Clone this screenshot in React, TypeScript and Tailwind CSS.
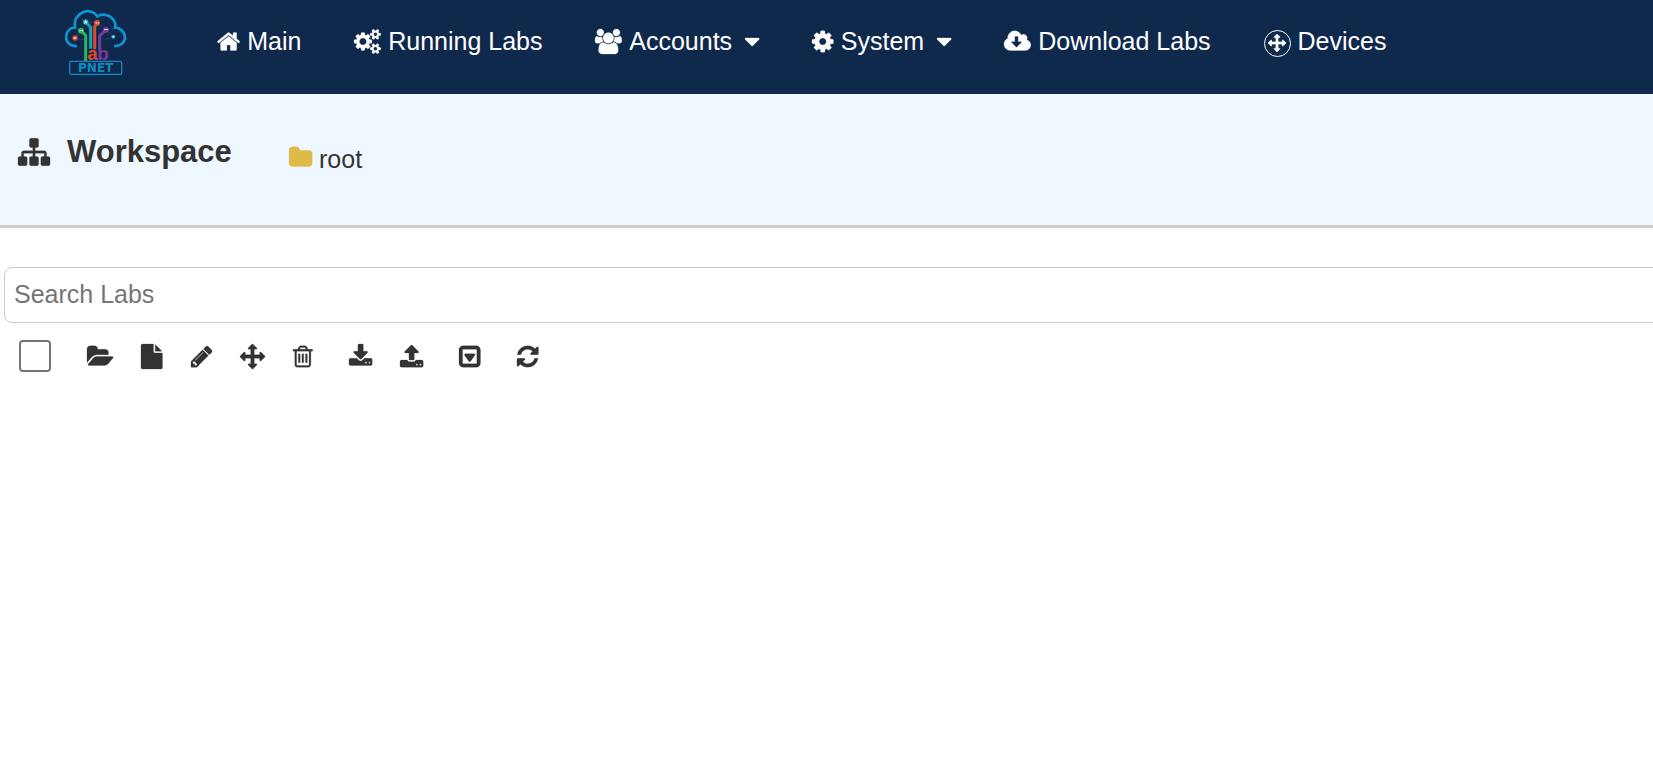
import React from 'react';

// Glyph outlines sit on a 1792 unit em square, only the width differs
const ICONS = {
  home: {
    width: 1664,
    path: 'M1408 992v480q0 26-19 45t-45 19h-384v-384h-256v384h-384q-26 0-45-19t-19-45v-480q0-1 .5-3t.5-3l575-474 575 474q1 2 1 6zm223-69l-62 74q-8 9-21 11h-3q-13 0-21-7l-692-577-692 577q-12 8-24 7-13-2-21-11l-62-74q-8-10-7-23.5t11-21.5l719-599q32-26 76-26t76 26l244 204v-195q0-14 9-23t23-9h192q14 0 23 9t9 23v408l219 182q10 8 11 21.5t-7 23.5z',
  },
  cogs: {
    width: 1920,
    path: 'M896 896q0-106-75-181t-181-75-181 75-75 181 75 181 181 75 181-75 75-181zm768 512q0-52-38-90t-90-38-90 38-38 90q0 53 37.5 90.5t90.5 37.5 90.5-37.5 37.5-90.5zm0-1024q0-52-38-90t-90-38-90 38-38 90q0 53 37.5 90.5t90.5 37.5 90.5-37.5 37.5-90.5zm-384 421v185q0 10-7 19.5t-16 10.5l-155 24q-11 35-32 76 34 48 90 115 7 11 7 20 0 12-7 19-23 30-82.5 89.5t-78.5 59.5q-11 0-21-7l-115-90q-37 19-77 31-11 108-23 155-7 24-30 24h-186q-11 0-20-7.5t-10-17.5l-23-153q-34-10-75-31l-118 89q-7 7-20 7-11 0-21-8-144-133-144-160 0-9 7-19 10-14 41-53t47-61q-23-44-35-82l-152-24q-10-1-17-9.5t-7-19.5v-185q0-10 7-19.5t16-10.5l155-24q11-35 32-76-34-48-90-115-7-11-7-20 0-12 7-20 22-30 82-89t79-59q11 0 21 7l115 90q34-18 77-32 11-108 23-154 7-24 30-24h186q11 0 20 7.5t10 17.5l23 153q34 10 75 31l118-89q8-7 20-7 11 0 21 8 144 133 144 160 0 8-7 19-12 16-42 54t-45 60q23 48 34 82l152 23q10 2 17 10.5t7 19.5zm640 533v140q0 16-149 31-12 27-30 52 51 113 51 138 0 4-4 7-122 71-124 71-8 0-46-47t-52-68q-20 2-30 2t-30-2q-14 21-52 68t-46 47q-2 0-124-71-4-3-4-7 0-25 51-138-18-25-30-52-149-15-149-31v-140q0-16 149-31 13-29 30-52-51-113-51-138 0-4 4-7 4-2 35-20t59-34 30-16q8 0 46 46.5t52 67.5q20-2 30-2t30 2q51-71 92-112l6-2q4 0 124 70 4 3 4 7 0 25-51 138 17 23 30 52 149 15 149 31zm0-1024v140q0 16-149 31-12 27-30 52 51 113 51 138 0 4-4 7-122 71-124 71-8 0-46-47t-52-68q-20 2-30 2t-30-2q-14 21-52 68t-46 47q-2 0-124-71-4-3-4-7 0-25 51-138-18-25-30-52-149-15-149-31v-140q0-16 149-31 13-29 30-52-51-113-51-138 0-4 4-7 4-2 35-20t59-34 30-16q8 0 46 46.5t52 67.5q20-2 30-2t30 2q51-71 92-112l6-2q4 0 124 70 4 3 4 7 0 25-51 138 17 23 30 52 149 15 149 31z',
  },
  users: {
    width: 1920,
    path: 'M593 896q-162 5-265 128h-134q-82 0-138-40.5t-56-118.5q0-353 124-353 6 0 43.5 21t97.5 42.5 119 21.5q67 0 133-23-5 37-5 66 0 139 81 256zm1071 637q0 120-73 189.5t-194 69.5h-874q-121 0-194-69.5t-73-189.5q0-53 3.5-103.5t14-109 26.5-108.5 43-97.5 62-81 85.5-53.5 111.5-20q10 0 43 21.5t73 48 107 48 135 21.5 135-21.5 107-48 73-48 43-21.5q61 0 111.5 20t85.5 53.5 62 81 43 97.5 26.5 108.5 14 109 3.5 103.5zm-1024-1277q0 106-75 181t-181 75-181-75-75-181 75-181 181-75 181 75 75 181zm704 384q0 159-112.5 271.5t-271.5 112.5-271.5-112.5-112.5-271.5 112.5-271.5 271.5-112.5 271.5 112.5 112.5 271.5zm576 225q0 78-56 118.5t-138 40.5h-134q-103-123-265-128 81-117 81-256 0-29-5-66 66 23 133 23 59 0 119-21.5t97.5-42.5 43.5-21q124 0 124 353zm-128-609q0 106-75 181t-181 75-181-75-75-181 75-181 181-75 181 75 75 181z',
  },
  cog: {
    width: 1536,
    path: 'M1024 896q0-106-75-181t-181-75-181 75-75 181 75 181 181 75 181-75 75-181zm512-109v222q0 12-8 23t-20 13l-185 28q-19 54-39 91 35 50 107 138 10 12 10 25t-9 23q-27 37-99 108t-94 71q-12 0-26-9l-138-108q-44 23-91 38-16 136-29 186-7 28-36 28h-222q-14 0-24.5-8.5t-11.5-21.5l-28-184q-49-16-90-37l-141 107q-10 9-25 9-14 0-25-11-126-114-165-168-7-10-7-23 0-12 8-23 15-21 51-66.5t54-70.5q-27-50-41-99l-183-27q-13-2-21-12.5t-8-23.5v-222q0-12 8-23t19-13l186-28q14-46 39-92-40-57-107-138-10-12-10-24 0-10 9-23 26-36 98.5-107.5t94.5-71.5q13 0 26 10l138 107q44-23 91-38 16-136 29-186 7-28 36-28h222q14 0 24.5 8.5t11.5 21.5l28 184q49 16 90 37l142-107q9-9 24-9 13 0 25 10 129 119 165 170 7 8 7 22 0 12-8 23-15 21-51 66.5t-54 70.5q26 50 41 98l183 28q13 2 21 12.5t8 23.5z',
  },
  cloudDownload: {
    width: 1920,
    path: 'M1280 928q0-14-9-23t-23-9h-224v-352q0-13-9.5-22.5t-22.5-9.5h-192q-13 0-22.5 9.5t-9.5 22.5v352h-224q-13 0-22.5 9.5t-9.5 22.5q0 14 9 23l352 352q9 9 23 9t23-9l351-351q10-12 10-24zm640 224q0 159-112.5 271.5t-271.5 112.5h-1088q-185 0-316.5-131.5t-131.5-316.5q0-130 70-240t188-165q-2-30-2-43 0-212 150-362t362-150q156 0 285.5 87t188.5 231q71-62 166-62 106 0 181 75t75 181q0 76-41 138 130 31 213.5 135.5t83.5 238.5z',
  },
  arrows: {
    width: 1792,
    path: 'M1792 896q0 26-19 45l-256 256q-19 19-45 19t-45-19-19-45v-128h-384v384h128q26 0 45 19t19 45-19 45l-256 256q-19 19-45 19t-45-19l-256-256q-19-19-19-45t19-45 45-19h128v-384h-384v128q0 26-19 45t-45 19-45-19l-256-256q-19-19-19-45t19-45l256-256q19-19 45-19t45 19 19 45v128h384v-384h-128q-26 0-45-19t-19-45 19-45l256-256q19-19 45-19t45 19l256 256q19 19 19 45t-19 45-45 19h-128v384h384v-128q0-26 19-45t45-19 45 19l256 256q19 19 19 45z',
  },
  caretDown: {
    width: 1024,
    path: 'M1024 704q0 26-19 45l-448 448q-19 19-45 19t-45-19l-448-448q-19-19-19-45t19-45 45-19h896q26 0 45 19t19 45z',
  },
  sitemap: {
    width: 1792,
    path: 'M1792 1248v320q0 40-28 68t-68 28h-320q-40 0-68-28t-28-68v-320q0-40 28-68t68-28h96v-192h-512v192h96q40 0 68 28t28 68v320q0 40-28 68t-68 28h-320q-40 0-68-28t-28-68v-320q0-40 28-68t68-28h96v-192h-512v192h96q40 0 68 28t28 68v320q0 40-28 68t-68 28h-320q-40 0-68-28t-28-68v-320q0-40 28-68t68-28h96v-192q0-52 38-90t90-38h512v-192h-96q-40 0-68-28t-28-68v-320q0-40 28-68t68-28h320q40 0 68 28t28 68v320q0 40-28 68t-68 28h-96v192h512q52 0 90 38t38 90v192h96q40 0 68 28t28 68z',
  },
  folder: {
    width: 1664,
    path: 'M1664 608v704q0 92-66 158t-158 66h-1216q-92 0-158-66t-66-158v-960q0-92 66-158t158-66h320q92 0 158 66t66 158v32h672q92 0 158 66t66 158z',
  },
  folderOpen: {
    width: 1879,
    path: 'M1879 952q0 31-31 66l-336 396q-43 51-120.5 86.5t-143.5 35.5h-1088q-34 0-60.5-13t-26.5-43q0-31 31-66l336-396q43-51 120.5-86.5t143.5-35.5h1088q34 0 60.5 13t26.5 43zm-343-344v160h-832q-94 0-197 47.5t-164 119.5l-337 396-5 6q0-4-.5-12.5t-.5-12.5v-960q0-92 66-158t158-66h320q92 0 158 66t66 158v32h544q92 0 158 66t66 158z',
  },
  file: {
    width: 1536,
    path: 'M1024 512v-472q22 14 36 28l408 408q14 14 28 36h-472zm-128 32q0 40 28 68t68 28h544v1056q0 40-28 68t-68 28h-1344q-40 0-68-28t-28-68v-1600q0-40 28-68t68-28h800v544z',
  },
  pencil: {
    width: 1536,
    path: 'M363 1536l91-91-235-235-91 91v107h128v128h107zm523-928q0-22-22-22-10 0-17 7l-542 542q-7 7-7 17 0 22 22 22 10 0 17-7l542-542q7-7 7-17zm-54-192l416 416-832 832h-416v-416zm683 96q0 53-37 90l-166 166-416-416 166-165q36-38 90-38 53 0 91 38l235 234q37 39 37 91z',
  },
  trash: {
    width: 1408,
    path: 'M512 736v576q0 14-9 23t-23 9h-64q-14 0-23-9t-9-23v-576q0-14 9-23t23-9h64q14 0 23 9t9 23zm256 0v576q0 14-9 23t-23 9h-64q-14 0-23-9t-9-23v-576q0-14 9-23t23-9h64q14 0 23 9t9 23zm256 0v576q0 14-9 23t-23 9h-64q-14 0-23-9t-9-23v-576q0-14 9-23t23-9h64q14 0 23 9t9 23zm128 724v-948h-896v948q0 22 7 40.5t14.5 27 10.5 8.5h832q3 0 10.5-8.5t14.5-27 7-40.5zm-672-1076h448l-48-117q-7-9-17-11h-317q-10 2-17 11zm928 32v64q0 14-9 23t-23 9h-96v948q0 83-47 143.5t-113 60.5h-832q-66 0-113-58.5t-47-141.5v-952h-96q-14 0-23-9t-9-23v-64q0-14 9-23t23-9h309l70-167q15-37 54-63t79-26h320q40 0 79 26t54 63l70 167h309q14 0 23 9t9 23z',
  },
  download: {
    width: 1664,
    path: 'M1280 1344q0-26-19-45t-45-19-45 19-19 45 19 45 45 19 45-19 19-45zm256 0q0-26-19-45t-45-19-45 19-19 45 19 45 45 19 45-19 19-45zm128-224v320q0 40-28 68t-68 28h-1472q-40 0-68-28t-28-68v-320q0-40 28-68t68-28h465l135 136q58 56 136 56t136-56l136-136h464q40 0 68 28t28 68zm-325-569q17 41-14 70l-448 448q-18 19-45 19t-45-19l-448-448q-31-29-14-70 17-39 59-39h256v-448q0-26 19-45t45-19h256q26 0 45 19t19 45v448h256q42 0 59 39z',
  },
  upload: {
    width: 1664,
    path: 'M1280 1472q0-26-19-45t-45-19-45 19-19 45 19 45 45 19 45-19 19-45zm256 0q0-26-19-45t-45-19-45 19-19 45 19 45 45 19 45-19 19-45zm128-224v320q0 40-28 68t-68 28h-1472q-40 0-68-28t-28-68v-320q0-40 28-68t68-28h427q21 56 70.5 92t110.5 36h256q61 0 110.5-36t70.5-92h427q40 0 68 28t28 68zm-325-648q-17 40-59 40h-256v448q0 26-19 45t-45 19h-256q-26 0-45-19t-19-45v-448h-256q-42 0-59-40-17-39 14-69l448-448q18-19 45-19t45 19l448 448q31 30 14 69z',
  },
  caretSquare: {
    width: 1536,
    path: 'M1145 733q18 35-5 66l-320 448q-19 25-52 25t-52-25l-320-448q-23-31-5-66 17-35 57-35h640q40 0 57 35zm135 643v-960q0-14-9.5-23t-22.5-9h-960q-13 0-22.5 9.5t-9.5 22.5v960q0 13 9.5 22.5t22.5 9.5h960q13 0 22.5-9.5t9.5-22.5zm256-960v960q0 119-84.5 203.5t-203.5 84.5h-960q-119 0-203.5-84.5t-84.5-203.5v-960q0-119 84.5-203.5t203.5-84.5h960q119 0 203.5 84.5t84.5 203.5z',
  },
  refresh: {
    width: 1536,
    path: 'M1511 1056q0 5-1 7-64 268-268 434.5t-478 166.5q-146 0-282.5-55t-243.5-157l-129 129q-19 19-45 19t-45-19-19-45v-448q0-26 19-45t45-19h448q26 0 45 19t19 45-19 45l-137 137q71 66 161 102t187 36q134 0 250-65t186-179q11-17 53-117 8-23 30-23h192q13 0 22.5 9.5t9.5 22.5zm25-800v448q0 26-19 45t-45 19h-448q-26 0-45-19t-19-45 19-45l138-138q-148-137-349-137-134 0-250 65t-186 179q-11 17-53 117-8 23-30 23h-199q-13 0-22.5-9.5t-9.5-22.5v-7q65-268 270-434.5t480-166.5q146 0 284 55.5t245 156.5l130-129q19-19 45-19t45 19 19 45z',
  },
};

type IconName = keyof typeof ICONS;

const Icon: React.FC<{ name: IconName; className?: string }> = ({ name, className = 'h-[25px]' }) => (
  <svg
    viewBox={`0 0 ${ICONS[name].width} 1792`}
    className={`${className} w-auto shrink-0 overflow-visible`}
    fill="currentColor"
    stroke="currentColor"
    strokeWidth="18"
    aria-hidden="true"
  >
    <path d={ICONS[name].path} />
  </svg>
);

const Logo = () => (
  <svg viewBox="45 27 186 201" className="h-[67px] w-[62px]" role="img" aria-label="PNETLab">
    <g fill="none" stroke="#1a5a80" strokeWidth="1.5">
      <path d="M75 114L93 92L107 66L141 69L168 89L190 110M107 66L85 50M141 69L166 50M168 89L205 84M93 92L66 84M75 114L105 120M190 110L160 120" />
    </g>
    <path
      d="M81 138C58 140 46 124 49 106C51 92 62 83 75 82C71 61 82 43 101 36C117 30 134 36 142 49C158 39 181 45 190 59C196 67 197 76 195 82C213 84 225 97 225 112C225 128 212 139 192 138"
      fill="none"
      stroke="#0d96cf"
      strokeWidth="8"
    />
    <g fill="none" strokeWidth="9">
      <path d="M93 92L107 106V183" stroke="#2eb457" />
      <path d="M107 66L122 82V146" stroke="#12a5b5" />
      <path d="M141 69L134 80V148" stroke="#dd4a2c" />
      <path d="M168 89L149 108V150" stroke="#7b3a9b" />
    </g>
    <circle cx="93" cy="92" r="9" fill="#2eb457" />
    <circle cx="107" cy="66" r="8" fill="#25a6c9" />
    <circle cx="141" cy="69" r="9" fill="#dd4a2c" />
    <circle cx="168" cy="89" r="9" fill="#7b3a9b" />
    <circle cx="75" cy="114" r="8" fill="#dd4a2c" />
    <circle cx="190" cy="110" r="6" fill="#2c8fd0" />
    <g fill="#d6e6ef">
      <path d="M88 90h4v4h-4zM95 90h4v4h-4zM137 66h3v5h-3zM143 66h3v5h-3zM162 87h12v3h-12zM71 111h8v2h-8zM71 115h8v2h-8z" />
      <path d="M107 60l2 4h4l-3 3 1 5-4-3-4 3 1-5-3-3h4z" />
      <circle cx="190" cy="110" r="3" />
    </g>
    <rect x="59" y="184" width="156" height="39" rx="4" fill="#0f294d" stroke="#0d8cc4" strokeWidth="4" />
    <text fontFamily="Liberation Sans, Arial, sans-serif" fontWeight="700" fontSize="56">
      <tspan x="112" y="179" fill="#dd4a2c">
        a
      </tspan>
      <tspan x="142" y="179" fill="#7b3a9b">
        b
      </tspan>
      <tspan x="137" y="216" textAnchor="middle" fontFamily="DejaVu Sans, Verdana, sans-serif" fontSize="36" fill="#128bbf">
        PNET
      </tspan>
    </text>
  </svg>
);

interface NavItem {
  label: string;
  icon: IconName;
  hasMenu?: boolean;
  ringed?: boolean;
}

const NAV_ITEMS: NavItem[] = [
  { label: 'Main', icon: 'home' },
  { label: 'Running Labs', icon: 'cogs' },
  { label: 'Accounts', icon: 'users', hasMenu: true },
  { label: 'System', icon: 'cog', hasMenu: true },
  { label: 'Download Labs', icon: 'cloudDownload' },
  { label: 'Devices', icon: 'arrows', ringed: true },
];

const TOOL_GROUPS: { label: string; icon: IconName }[][] = [
  [
    { label: 'Add folder', icon: 'folderOpen' },
    { label: 'Add lab', icon: 'file' },
    { label: 'Rename', icon: 'pencil' },
    { label: 'Move', icon: 'arrows' },
    { label: 'Delete', icon: 'trash' },
  ],
  [
    { label: 'Import', icon: 'download' },
    { label: 'Export', icon: 'upload' },
  ],
  [{ label: 'More actions', icon: 'caretSquare' }],
  [{ label: 'Refresh', icon: 'refresh' }],
];

export default function App() {
  return (
    <div className="min-h-screen overflow-x-hidden bg-white font-['Liberation_Sans',Arial,sans-serif] text-[25px] leading-7 text-[#333]">
      <header className="flex items-start bg-[#0f294d] pb-[18px] pl-[65px] pt-[9px] text-white">
        <a href="#" className="block">
          <Logo />
        </a>

        <nav className="ml-[90px] flex gap-[53px] whitespace-nowrap pt-[18px]">
          {NAV_ITEMS.map((item) => (
            <a key={item.label} href="#" className="flex h-7 items-center gap-[7px]">
              {item.ringed ? (
                <span className="mt-1 flex size-[27px] items-center justify-center rounded-full border border-white">
                  <Icon name={item.icon} className="h-[18px]" />
                </span>
              ) : (
                <Icon name={item.icon} />
              )}
              <span>{item.label}</span>
              {item.hasMenu && (
                <span className="pl-[6px]">
                  <Icon name="caretDown" />
                </span>
              )}
            </a>
          ))}
        </nav>
      </header>

      <section className="flex items-start border-b-[3px] border-[#ccc] bg-[#f0f8ff] pb-[52px] pl-[18px] pt-10">
        <h1 className="flex items-center gap-[17px] text-[31px] font-bold leading-9">
          <Icon name="sitemap" className="h-8" />
          Workspace
        </h1>
        <a href="#" className="ml-[57px] mt-[11px] flex items-start gap-[7px]">
          <span className="text-[#dfba49]">
            <Icon name="folder" />
          </span>
          root
        </a>
      </section>

      <main className="pt-[39px]">
        {/* Search runs off the right edge */}
        <div className="-mr-3 ml-1">
          <input
            type="search"
            aria-label="Search Labs"
            placeholder="Search Labs"
            className="block h-14 w-full rounded-lg border border-[#ccc] bg-white px-[9px] pb-0.5 outline-none placeholder:text-[#757575]"
          />
        </div>

        <div className="flex items-center gap-9 pl-[19px] pt-[17px]">
          <input
            type="checkbox"
            aria-label="Select all"
            className="size-8 appearance-none rounded-[4px] border-2 border-[#767676] bg-white checked:bg-[#0075ff]"
          />
          {TOOL_GROUPS.map((group) => (
            <div key={group[0].icon} className="flex gap-7">
              {group.map((tool) => (
                <button key={tool.icon} type="button" title={tool.label} aria-label={tool.label} className="cursor-pointer">
                  <Icon name={tool.icon} />
                </button>
              ))}
            </div>
          ))}
        </div>
      </main>
    </div>
  );
}
